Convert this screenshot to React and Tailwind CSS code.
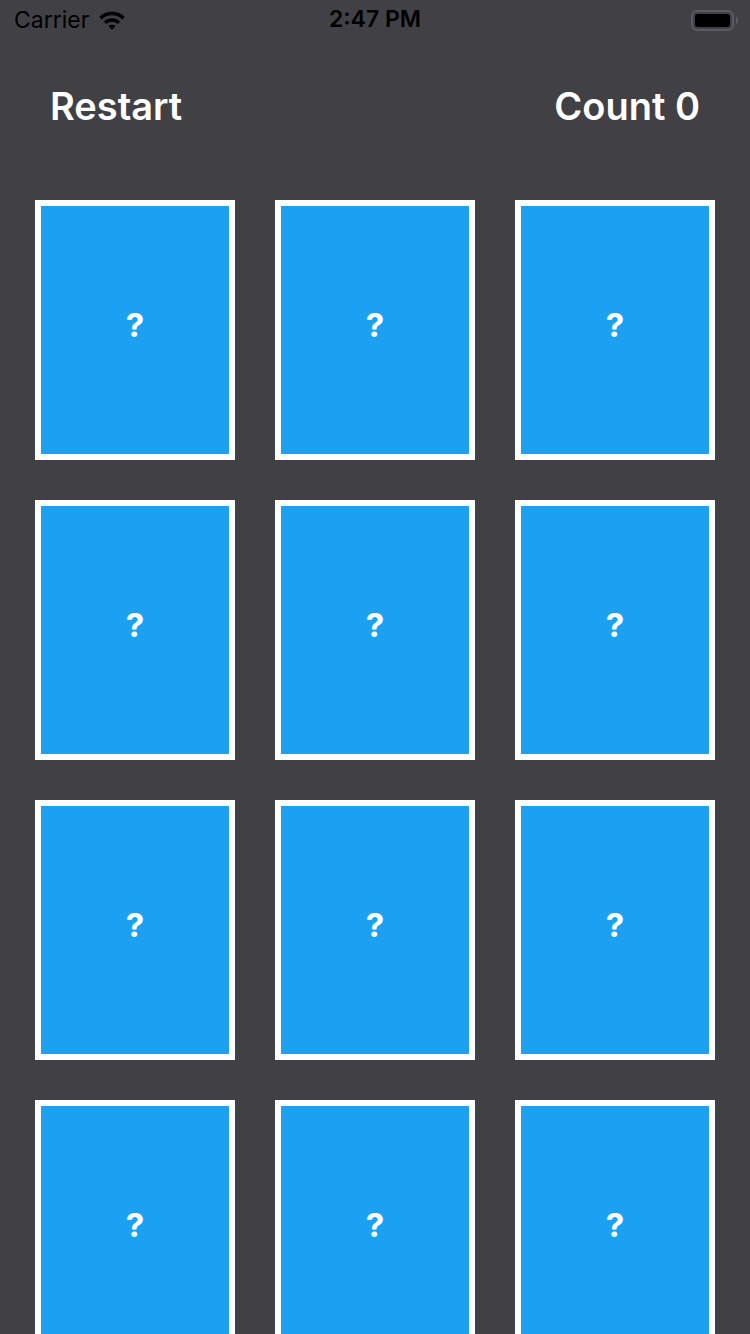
import React from "react";

function Wifi() {
  return (
    <svg width="30" height="22" viewBox="0 0 26 20" className="block">
      <path d="M1.5 7.2 A16.5 16.5 0 0 1 24.5 7.2 L22.3 9.5 A13.3 13.3 0 0 0 3.7 9.5 Z" fill="#000" />
      <path d="M5.6 11.4 A10.6 10.6 0 0 1 20.4 11.4 L18.2 13.6 A7.5 7.5 0 0 0 7.8 13.6 Z" fill="#000" />
      <path d="M9.8 15.6 A4.6 4.6 0 0 1 16.2 15.6 L13 18.9 Z" fill="#000" />
    </svg>
  );
}

function Battery() {
  return (
    <div className="flex items-center">
      <div className="w-[43px] h-[21px] rounded-[6px] border-2 border-[#5c5b60] p-[2px]">
        <div className="w-full h-full rounded-[3px] bg-black" />
      </div>
      <div className="w-[2px] h-[7px] rounded-r-sm bg-[#5c5b60] ml-[2px]" />
    </div>
  );
}

function Card() {
  return (
    <div className="w-[200px] h-[260px] border-[6px] border-white bg-[#1ca1f2] flex items-center justify-center">
      <span
        className="text-white font-bold text-[33px] leading-none -mt-[10px]"
        style={{ fontFamily: "Inter, 'Liberation Sans', sans-serif" }}
      >
        ?
      </span>
    </div>
  );
}

export default function App() {
  const cards = Array.from({ length: 12 });
  return (
    <div
      className="w-[750px] h-[1334px] bg-[#414045] overflow-hidden"
      style={{ fontFamily: "Inter, 'Liberation Sans', sans-serif" }}
    >
      <div className="h-[40px] relative flex items-center justify-between pl-[14px] pr-[12px]">
        <div className="flex items-center gap-[8px]">
          <span className="text-[23px] text-black leading-none">Carrier</span>
          <Wifi />
        </div>
        <span className="absolute left-1/2 -translate-x-1/2 top-[8px] text-[23px] font-semibold text-black leading-none">
          2:47 PM
        </span>
        <Battery />
      </div>
      <div className="h-[130px] flex items-center justify-between pl-[50px] pr-[50px] pt-[2px]">
        <span className="text-white text-[38px] font-semibold leading-none">Restart</span>
        <span className="text-white text-[38px] font-semibold leading-none">Count 0</span>
      </div>
      <div className="pt-[30px] pl-[35px] grid grid-cols-[200px_200px_200px] gap-[40px]">
        {cards.map((_, i) => (
          <Card key={i} />
        ))}
      </div>
    </div>
  );
}
